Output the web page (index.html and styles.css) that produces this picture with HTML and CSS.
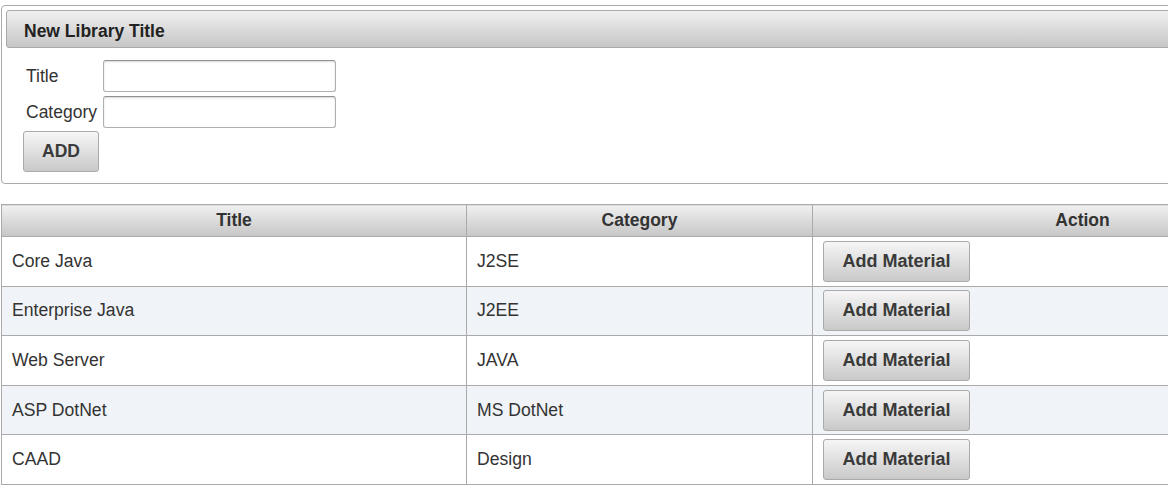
FILE: index.html
```html
<!DOCTYPE html>
<html>
<head>
<meta charset="utf-8">
<title>Library</title>
<link rel="stylesheet" href="styles.css">
</head>
<body>
<div class="page">
  <div class="panel">
    <div class="panel-header">New Library Title</div>
    <form class="form">
      <div class="form-grid">
        <label class="form-label">Title</label>
        <input class="form-input" type="text">
        <label class="form-label">Category</label>
        <input class="form-input" type="text">
      </div>
      <button type="button" class="btn btn-add">ADD</button>
    </form>
  </div>

  <table class="grid">
    <colgroup>
      <col class="col-title">
      <col class="col-cat">
      <col class="col-action">
    </colgroup>
    <thead>
      <tr><th>Title</th><th>Category</th><th>Action</th></tr>
    </thead>
    <tbody>
      <tr><td>Core Java</td><td>J2SE</td><td><button type="button" class="btn btn-mat">Add Material</button></td></tr>
      <tr class="alt"><td>Enterprise Java</td><td>J2EE</td><td><button type="button" class="btn btn-mat">Add Material</button></td></tr>
      <tr><td>Web Server</td><td>JAVA</td><td><button type="button" class="btn btn-mat">Add Material</button></td></tr>
      <tr class="alt"><td>ASP DotNet</td><td>MS DotNet</td><td><button type="button" class="btn btn-mat">Add Material</button></td></tr>
      <tr><td>CAAD</td><td>Design</td><td><button type="button" class="btn btn-mat">Add Material</button></td></tr>
    </tbody>
  </table>
</div>
</body>
</html>
```

FILE: styles.css
```css
html, body {
  margin: 0;
  padding: 0;
  background: #fff;
  overflow: hidden;
}
body {
  font-family: "Liberation Sans", Arial, sans-serif;
  color: #333;
}
.page {
  width: 1352px;
  padding: 5px 0 0 1px;
}
.panel {
  border: 1px solid #aaa;
  border-radius: 4px;
  padding: 4px 4px 11px 4px;
}
.panel-header {
  height: 36px;
  line-height: 40px;
  border: 1px solid #aaa;
  border-radius: 3px;
  background: linear-gradient(#f0f0f0, #c6c6c6);
  padding-left: 17px;
  font-weight: bold;
  font-size: 17.5px;
  color: #222;
  overflow: hidden;
}
.form {
  padding: 12px 0 0 17px;
}
.form-grid {
  display: grid;
  grid-template-columns: 80px 233px;
  row-gap: 4px;
  align-items: center;
}
.form-label {
  padding-left: 3px;
  font-size: 17.5px;
  color: #333;
  white-space: nowrap;
}
.form-input {
  box-sizing: border-box;
  width: 233px;
  height: 32px;
  margin: 0;
  border: 1px solid #b0b0b0;
  border-top-color: #909090;
  border-radius: 3px;
  box-shadow: inset 0 1px 2px rgba(0,0,0,0.15);
  background: #fff;
}
.btn {
  box-sizing: border-box;
  margin: 0;
  border: 1px solid #aaa;
  border-radius: 3px;
  background: linear-gradient(#f6f6f6, #c9c9c9);
  font-family: "Liberation Sans", Arial, sans-serif;
  font-weight: bold;
  color: #3a3a3a;
  cursor: pointer;
}
.btn-add {
  display: block;
  width: 76px;
  height: 41px;
  margin-top: 3px;
  font-size: 17.5px;
}
.grid {
  margin-top: 20px;
  width: 1351px;
  border-collapse: collapse;
  table-layout: fixed;
  border: 1px solid #aaa;
}
.col-title { width: 465px; }
.col-cat { width: 346px; }
.col-action { width: 540px; }
.grid th {
  height: 31px;
  padding: 0;
  border: 1px solid #aaa;
  background: linear-gradient(#f0f0f0, #c6c6c6);
  font-weight: bold;
  font-size: 17.5px;
  color: #333;
  text-align: center;
}
.grid td {
  height: 48.6px;
  padding: 0 0 0 10px;
  border: 1px solid #aaa;
  font-size: 17.6px;
  color: #333;
  vertical-align: middle;
}
.grid tr.alt td {
  background: #f0f3f7;
}
.btn-mat {
  display: block;
  width: 147px;
  height: 41px;
  font-size: 18px;
}
```
